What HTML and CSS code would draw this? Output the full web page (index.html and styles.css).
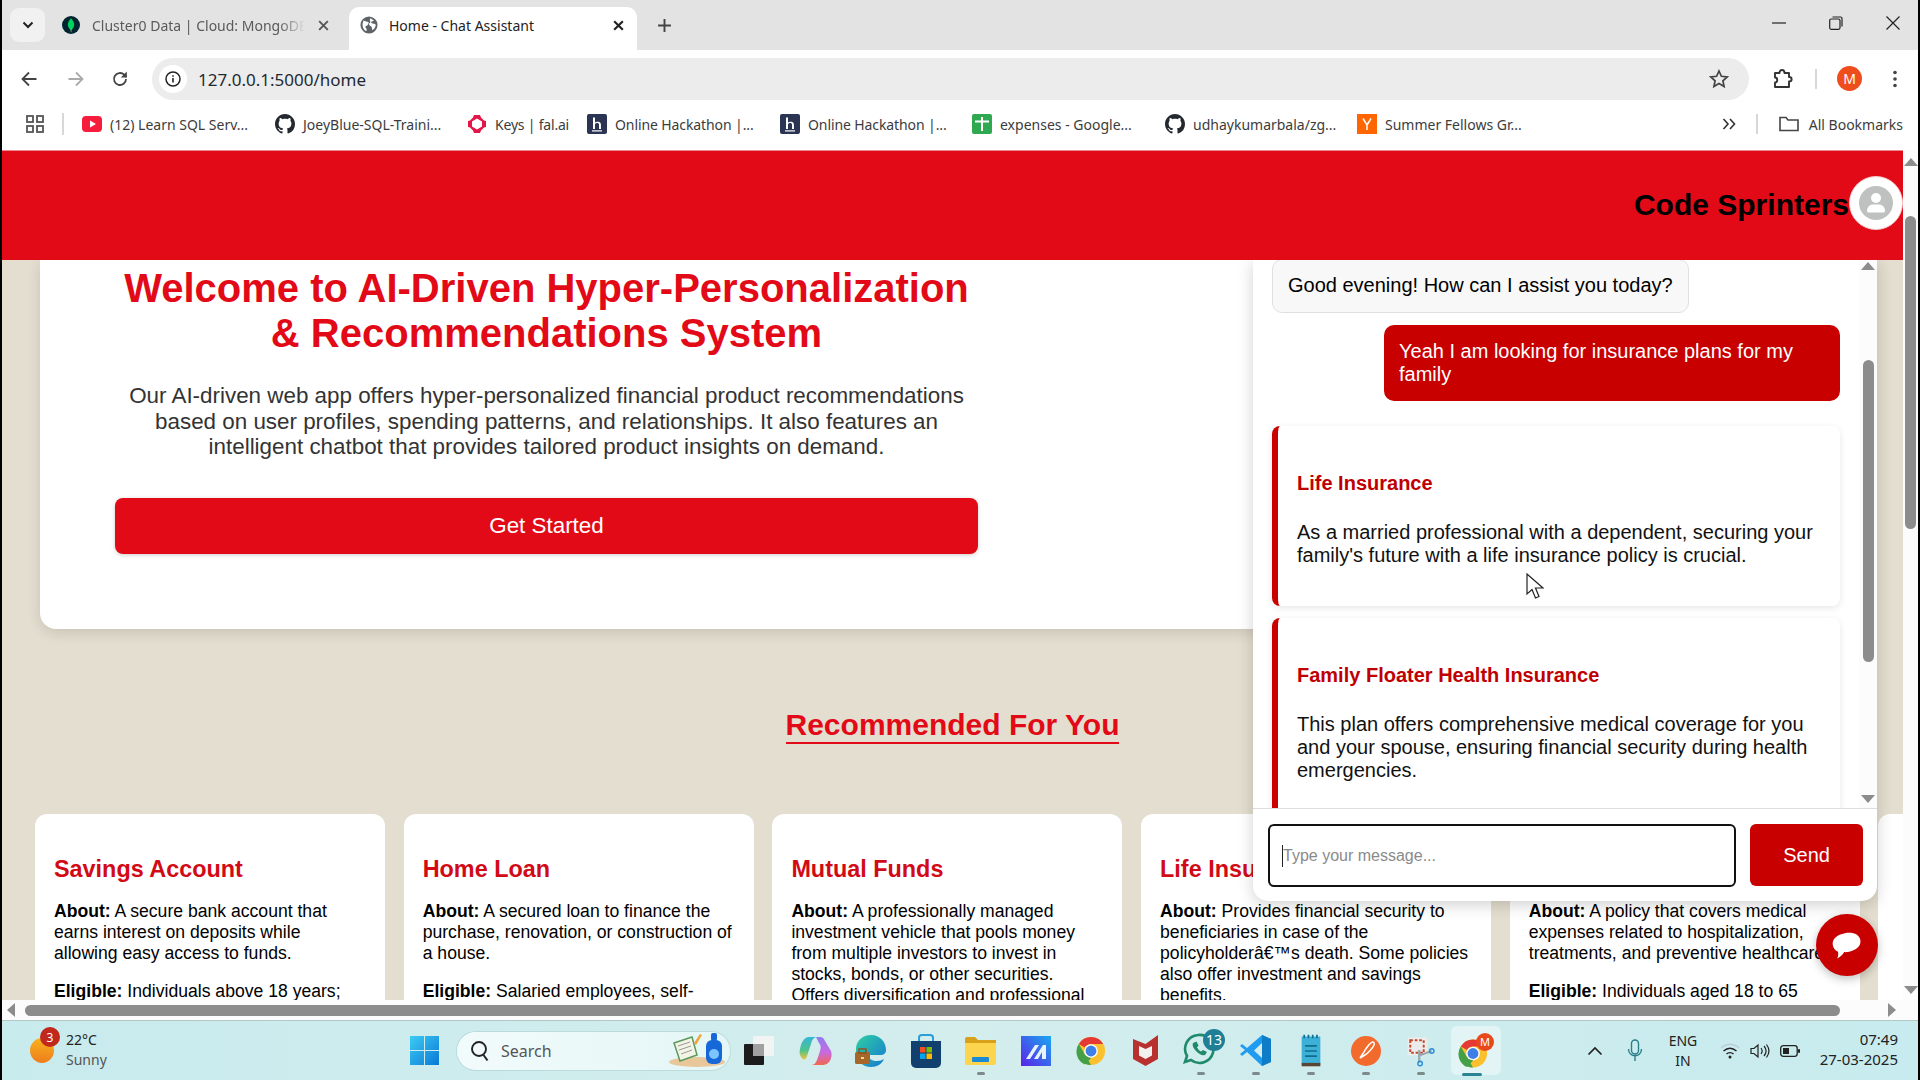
FILE: index.html
```html
<!DOCTYPE html>
<html lang="en">
<head>
<meta charset="utf-8">
<title>Home - Chat Assistant</title>
<link rel="stylesheet" href="styles.css">
</head>
<body>
<svg class="defs" width="0" height="0" aria-hidden="true">
  <symbol id="gh" viewBox="0 0 16 16"><path fill="#24292f" d="M8 0C3.58 0 0 3.58 0 8c0 3.54 2.29 6.53 5.47 7.59.4.07.55-.17.55-.38 0-.19-.01-.82-.01-1.49-2.01.37-2.53-.49-2.69-.94-.09-.23-.48-.94-.82-1.13-.28-.15-.68-.52-.01-.53.63-.01 1.08.58 1.23.82.72 1.21 1.87.87 2.33.66.07-.52.28-.87.51-1.07-1.78-.2-3.64-.89-3.64-3.95 0-.87.31-1.59.82-2.15-.08-.2-.36-1.02.08-2.12 0 0 .67-.21 2.2.82.64-.18 1.32-.27 2-.27.68 0 1.36.09 2 .27 1.53-1.04 2.2-.82 2.2-.82.44 1.1.16 1.92.08 2.12.51.56.82 1.27.82 2.15 0 3.07-1.87 3.75-3.65 3.95.29.25.54.73.54 1.48 0 1.07-.01 1.93-.01 2.2 0 .21.15.46.55.38A8.013 8.013 0 0016 8c0-4.42-3.58-8-8-8z"/></symbol>
  <symbol id="hr" viewBox="0 0 20 20"><rect width="20" height="20" rx="2" fill="#2b3553"/><path d="M6 3.500h2v5c1-1 4.500-1.500 5.500.5.400.8.500 1.500.500 6h-2v-4.500c0-2-3.700-2-4 0V15H6z" fill="#fff"/><rect x="5" y="16.300" width="10" height="1.200" fill="#fff"/></symbol>
  <symbol id="chrome" viewBox="0 0 32 32"><circle cx="16" cy="16" r="15" fill="#fbc02d"/><path d="M16 1a15 15 0 0 1 13 7.500H16a7.500 7.500 0 0 0-6.500 3.750L3 8.500A15 15 0 0 1 16 1z" fill="#e53935"/><path d="M3 8.500l6.500 11.250A7.500 7.500 0 0 0 16 23.500L9.500 30.500 A15 15 0 0 1 3 8.500z" fill="#43a047"/><path d="M9.500 19.750L16 31a15 15 0 0 1-6.800-1.700l6.800-5.800z" fill="#43a047"/><circle cx="16" cy="16" r="7.300" fill="#fff"/><circle cx="16" cy="16" r="5.800" fill="#3f7fe8"/></symbol>
</svg>
<div class="screen">

  <div class="tabstrip">
    <div class="tab-menu"><svg width="12" height="8" viewBox="0 0 12 8"><path d="M1.500 1.500 6 6l4.500-4.500" fill="none" stroke="#222" stroke-width="2"/></svg></div>
    <div class="tab first">
      <svg class="favicon" viewBox="0 0 20 20"><circle cx="10" cy="10" r="10" fill="#01242f"/><path d="M10 2.500c2.800 3 3.700 5.500 3.500 7.800-.2 2.600-2 4.400-3.500 5.400-1.500-1-3.300-2.800-3.500-5.400C6.300 8 7.200 5.500 10 2.500z" fill="#00d25f"/><rect x="9.700" y="14" width=".7" height="4" fill="#9fd8a8"/></svg>
      <span class="tab-title fade">Cluster0 Data | Cloud: MongoDB</span>
      <svg class="tab-x" viewBox="0 0 12 12"><path d="M2 2l8 8M10 2l-8 8" stroke="#555" stroke-width="1.700"/></svg>
    </div>
    <div class="tab current">
      <svg class="favicon" viewBox="0 0 20 20"><circle cx="10" cy="10" r="9.500" fill="#5f6368"/><path d="M4 5c2 .5 3 1.500 4.500 1.500S10 8.500 8.500 10 6 10.500 6 12c0 1 1 1.500 1.500 3S6 17 5.500 16C3 14 1.800 9 4 5zM12 2.500c1 1.500 2.500 1.500 3.500 2.500-1 1-2 .5-3 1.500s1 2 3 2 2 1.500 2 2c-1 3-2 4-3.500 5.200-1-1.200-.5-3-1.500-4s-2.500-1-2.500-2.700c0-1 1.500-1 1.500-2.500C11.500 5.500 10 4 12 2.500z" fill="#fff"/></svg>
      <span class="tab-title">Home - Chat Assistant</span>
      <svg class="tab-x" viewBox="0 0 12 12"><path d="M2 2l8 8M10 2l-8 8" stroke="#222" stroke-width="2"/></svg>
    </div>
    <svg class="tab-plus" viewBox="0 0 14 14"><path d="M7 1v12M1 7h12" stroke="#444" stroke-width="1.800"/></svg>
    <div class="win-controls">
      <svg viewBox="0 0 14 14"><path d="M0 7h14" stroke="#222" stroke-width="1.200"/></svg>
      <svg viewBox="0 0 14 14"><rect x=".7" y="3" width="10.300" height="10.300" rx="1.500" fill="none" stroke="#222" stroke-width="1.200"/><path d="M3.500 1h8a1.500 1.500 0 0 1 1.500 1.500v8" fill="none" stroke="#222" stroke-width="1.200"/></svg>
      <svg viewBox="0 0 14 14"><path d="M.5.500l13 13M13.500.500l-13 13" stroke="#222" stroke-width="1.200"/></svg>
    </div>
  </div>

  <div class="toolbar">
    <svg class="tool back" viewBox="0 0 18 18"><path d="M16.500 9H2.500M9 2.500 2.500 9 9 15.500" fill="none" stroke="#444" stroke-width="1.800"/></svg>
    <svg class="tool fwd" viewBox="0 0 18 18"><path d="M1.500 9h14M9 2.500 15.500 9 9 15.500" fill="none" stroke="#aaa" stroke-width="1.800"/></svg>
    <svg class="tool reload" viewBox="0 0 18 18"><path d="M15 9a6 6 0 1 1-1.800-4.300L15.500 7" fill="none" stroke="#444" stroke-width="1.800"/><path d="M15.800 1.500v6h-6" fill="#444"/></svg>
    <div class="omnibox">
      <span class="info"><svg width="16" height="16" viewBox="0 0 16 16"><circle cx="8" cy="8" r="7" fill="none" stroke="#222" stroke-width="1.500"/><path d="M8 7v4.500M8 4.200v1.600" stroke="#222" stroke-width="1.600"/></svg></span>
      <span class="url">127.0.0.1:5000/home</span>
      <svg class="star" viewBox="0 0 20 20"><path d="M10 2l2.400 5.300 5.800.6-4.300 3.900 1.200 5.700L10 14.600l-5.100 2.900 1.200-5.700L1.800 7.900l5.800-.6z" fill="none" stroke="#444" stroke-width="1.700"/></svg>
    </div>
    <svg class="ext" viewBox="0 0 22 22"><path d="M3 5h4.500c0-4 5-4 5 0H17v4c3.500 0 3.500 4.500 0 4.500V19H3v-4.500c3 0 3-5 0-5z" fill="none" stroke="#333" stroke-width="1.900" stroke-linejoin="round"/></svg>
    <span class="sep tool-sep"></span>
    <span class="profile">M</span>
    <svg class="dots" viewBox="0 0 4 18"><circle cx="2" cy="2.500" r="1.800" fill="#444"/><circle cx="2" cy="9" r="1.800" fill="#444"/><circle cx="2" cy="15.500" r="1.800" fill="#444"/></svg>
  </div>

  <div class="bookmarks">
    <svg class="apps" viewBox="0 0 18 18"><g fill="none" stroke="#555" stroke-width="1.800"><rect x="1" y="1" width="6" height="6"/><rect x="11" y="1" width="6" height="6"/><rect x="1" y="11" width="6" height="6"/><rect x="11" y="11" width="6" height="6"/></g></svg>
    <span class="sep bm-sep"></span>
    <a class="bm b1"><svg viewBox="0 0 20 20"><rect y="2" width="20" height="16" rx="4" fill="#f61c3c"/><path d="M8 6.500v7l6-3.500z" fill="#fff"/></svg>(12) Learn SQL Serv...</a>
    <a class="bm b2"><svg viewBox="0 0 20 20"><use href="#gh"/></svg>JoeyBlue-SQL-Traini...</a>
    <a class="bm b3"><svg viewBox="0 0 20 20"><path d="M7 1h6l1 2.500 3 3L19 7v6l-2 .5-3 3L13 19H7l-1-2.500-3-3L1 13V7l2-.5 3-3z" fill="#e2164a"/><path d="M10 4.500 15 7.500v5L10 15.500 5 12.500v-5z" fill="#fff"/></svg>Keys | fal.ai</a>
    <a class="bm b4"><svg viewBox="0 0 20 20"><use href="#hr"/></svg>Online Hackathon |...</a>
    <a class="bm b5"><svg viewBox="0 0 20 20"><use href="#hr"/></svg>Online Hackathon |...</a>
    <a class="bm b6"><svg viewBox="0 0 20 20"><rect width="20" height="20" rx="2" fill="#2fa84f"/><path d="M3 7.500h14M10 3v14" stroke="#fff" stroke-width="2"/></svg>expenses - Google...</a>
    <a class="bm b7"><svg viewBox="0 0 20 20"><use href="#gh"/></svg>udhaykumarbala/zg...</a>
    <a class="bm b8"><svg viewBox="0 0 20 20"><rect width="20" height="20" fill="#f60"/><path d="M6 4.500l4 6.500 4-6.500M10 11v5" fill="none" stroke="#fff" stroke-width="1.500"/></svg>Summer Fellows Gr...</a>
    <div class="bm-end">
      <svg class="more" viewBox="0 0 14 12"><path d="M1.500 1 6 6l-4.500 5M8 1l4.500 5L8 11" fill="none" stroke="#333" stroke-width="1.600"/></svg>
      <span class="sep end-sep"></span>
      <svg class="folder" viewBox="0 0 20 16"><path d="M1 14.500V1.500h6l2 2.500h10v10.500z" fill="none" stroke="#444" stroke-width="1.600"/></svg>
      <span class="all">All Bookmarks</span>
    </div>
  </div>

  <div class="viewport">
    <main class="page">
      <header class="site-header">
        <span class="brand">Code Sprinters</span>
        <span class="avatar"><svg width="34" height="34" viewBox="0 0 34 34"><circle cx="17" cy="17" r="17" fill="#bfc0c0"/><circle cx="17" cy="12" r="5" fill="#fff"/><path d="M8 25c0-4 3-6.500 6-6.500h6c3 0 6 2.500 6 6.500 0 1-1 1.500-2 1.500H10c-1 0-2-.5-2-1.500z" fill="#fff"/></svg></span>
      </header>
      <section class="hero">
        <h1>Welcome to AI-Driven Hyper-Personalization &amp; Recommendations System</h1>
        <p>Our AI-driven web app offers hyper-personalized financial product recommendations based on user profiles, spending patterns, and relationships. It also features an intelligent chatbot that provides tailored product insights on demand.</p>
        <button class="cta">Get Started</button>
      </section>
      <div class="rec-head"><h2>Recommended For You</h2></div>
      <section class="cards">
        <article class="card"><h3>Savings Account</h3><p><b>About:</b> A secure bank account that earns interest on deposits while allowing easy access to funds.</p><p><b>Eligible:</b> Individuals above 18 years; minimum deposit required.</p></article>
        <article class="card"><h3>Home Loan</h3><p><b>About:</b> A secured loan to finance the purchase, renovation, or construction of a house.</p><p><b>Eligible:</b> Salaried employees, self-employed individuals.</p></article>
        <article class="card"><h3>Mutual Funds</h3><p><b>About:</b> A professionally managed investment vehicle that pools money from multiple investors to invest in stocks, bonds, or other securities. Offers diversification and professional management.</p></article>
        <article class="card"><h3>Life Insurance</h3><p><b>About:</b> Provides financial security to beneficiaries in case of the policyholderâ€™s death. Some policies also offer investment and savings benefits.</p></article>
        <article class="card"><h3>Health Insurance</h3><p><b>About:</b> A policy that covers medical expenses related to hospitalization, treatments, and preventive healthcare.</p><p><b>Eligible:</b> Individuals aged 18 to 65 years.</p></article>
        <article class="card"></article>
      </section>

      <aside class="chat">
        <div class="chat-log">
          <div class="chat-msgs">
            <div class="bubble bot">Good evening! How can I assist you today?</div>
            <div class="bubble user">Yeah I am looking for insurance plans for my family</div>
            <div class="rec"><h4>Life Insurance</h4><p>As a married professional with a dependent, securing your family's future with a life insurance policy is crucial.</p></div>
            <div class="rec"><h4>Family Floater Health Insurance</h4><p>This plan offers comprehensive medical coverage for you and your spouse, ensuring financial security during health emergencies.</p></div>
          </div>
          <div class="chat-scroll">
            <span class="tri up"></span>
            <span class="chat-thumb"></span>
            <span class="tri down"></span>
          </div>
        </div>
        <div class="chat-input">
          <div class="field"><span class="caret"></span><span class="ph">Type your message...</span></div>
          <button class="send">Send</button>
        </div>
        <svg class="cursor" width="18" height="27" viewBox="0 0 18 27"><path d="M1 1v20l5-4.500 3.500 8.500 3.500-1.500-3.500-8.500H17z" fill="#fff" stroke="#222" stroke-width="1.200"/></svg>
      </aside>

      <button class="fab" aria-label="Chat"><svg width="34" height="30" viewBox="0 0 34 30"><path d="M17 3c8 0 14 3.500 14 9.500S25 22 18 22c-2 0-3.500 0-5-.5C11 24 8 26 5 26.500c1.500-2 2-4 2-6.500C4 18 3 15 3 12.500 3 6.500 9 3 17 3z" fill="#fff" transform="rotate(-10 17 15)"/></svg></button>
    </main>

    <div class="vscroll">
      <span class="tri up"></span>
      <span class="v-thumb"></span>
      <span class="tri down"></span>
    </div>
    <div class="hscroll">
      <span class="tri left"></span>
      <span class="h-thumb"></span>
      <span class="tri right"></span>
    </div>
  </div>

  <footer class="taskbar">
    <div class="weather">
      <span class="sun"></span><span class="sun-badge">3</span>
      <div class="w-text"><span class="w-temp">22°C</span><span class="w-sky">Sunny</span></div>
    </div>
    <div class="cell"><svg width="29" height="29" viewBox="0 0 29 29"><defs><linearGradient id="win" x1="0" y1="0" x2="1" y2="1"><stop offset="0" stop-color="#3ccdf4"/><stop offset="1" stop-color="#0a78d6"/></linearGradient></defs><path d="M0 0h14v14H0zM15 0h14v14H15zM0 15h14v14H0zM15 15h14v14H15z" fill="url(#win)"/></svg></div>
    <div class="search">
      <svg width="20" height="22" viewBox="0 0 20 22"><circle cx="9" cy="9" r="7" fill="none" stroke="#222" stroke-width="1.900"/><path d="M13.500 15l4 5.500" stroke="#222" stroke-width="2"/></svg>
      <span>Search</span>
      <svg class="search-art" width="58" height="38" viewBox="0 0 58 38"><ellipse cx="29" cy="31" rx="28" ry="5" fill="#e8c79a"/><path d="M6 12l18-6 5 18-17 6z" fill="#f4f4e6" stroke="#5c9a5c" stroke-width="1.500"/><path d="M10 15l12-4M11 19l12-4M13 23l11-4" stroke="#999"/><path d="M26 12l6-9 2 1-6 10z" fill="#f2a33a"/><rect x="38" y="9" width="16" height="24" rx="6" fill="#1668d8"/><rect x="43" y="2" width="6" height="8" rx="2" fill="#1668d8"/><circle cx="46" cy="23" r="5" fill="#7ec5ff"/></svg>
    </div>
    <div class="cell wide"><svg width="30" height="30" viewBox="0 0 30 30"><rect x="0" y="8" width="20" height="21" rx="1" fill="#1c1c1c"/><rect x="9" y="0" width="21" height="20" rx="1.500" fill="#f2f4f4"/><rect x="9" y="8" width="11" height="12" fill="#a0a0a0"/></svg></div>

    <div class="cell"><svg width="34" height="30" viewBox="0 0 34 30"><defs><linearGradient id="copa" x1="0" y1="0" x2="0" y2="1"><stop offset="0" stop-color="#35b6d8"/><stop offset=".6" stop-color="#4fc38a"/><stop offset="1" stop-color="#f4c23c"/></linearGradient><linearGradient id="copb" x1="0" y1="0" x2="0" y2="1"><stop offset="0" stop-color="#8f7cf0"/><stop offset=".55" stop-color="#c86ae0"/><stop offset="1" stop-color="#f2674a"/></linearGradient></defs><path d="M10 1h7c-3 1-4 3-5 7l-4 12c-1 3-2 4-4 3-3-2-4-6-3-10 1-6 4-12 9-12z" fill="url(#copa)"/><path d="M17 1h4c3 0 4 2 5 4l6 10c2 5-1 14-8 14H12c3 0 5-2 6-5l3-9c1-3 1-6-1-8-1-2-2-4-3-6z" fill="url(#copb)"/></svg></div>
    <div class="cell"><svg width="32" height="34" viewBox="0 0 32 34"><defs><linearGradient id="edge" x1="0" y1="0" x2="1" y2="1"><stop offset="0" stop-color="#2fd0a0"/><stop offset="1" stop-color="#1478d4"/></linearGradient></defs><path d="M1 14C2 5 9 1 16 1c9 0 15 7 15 15 0 3-2 5-6 5H13c0 4 5 6 9 6 3 0 5-1 7-2-2 5-7 8-13 8C7 33 0 26 1 14z" fill="url(#edge)"/><rect x="0" y="18" width="15" height="12" rx="1.500" fill="#a5682a"/><rect x="4" y="15" width="7" height="4" fill="none" stroke="#8a5523" stroke-width="1.500"/><rect x="6" y="23" width="3" height="2" fill="#f8d88a"/></svg></div>
    <div class="cell"><svg width="30" height="34" viewBox="0 0 30 34"><path d="M8 7V3.500C8 1.500 9.500 1 11 1h8c1.500 0 3 .5 3 2.500V7" fill="none" stroke="#2a9ed8" stroke-width="2"/><path d="M0 7h30v22a5 5 0 0 1-5 5H5a5 5 0 0 1-5-5z" fill="#12406e"/><rect x="9" y="13" width="5.500" height="5.500" fill="#f25022"/><rect x="15.500" y="13" width="5.500" height="5.500" fill="#7fba00"/><rect x="9" y="19.500" width="5.500" height="5.500" fill="#00a4ef"/><rect x="15.500" y="19.500" width="5.500" height="5.500" fill="#ffb900"/></svg></div>
    <div class="cell dash"><svg width="31" height="29" viewBox="0 0 31 29"><path d="M0 3a2 2 0 0 1 2-2h8l3 3h18v6H0z" fill="#d9a019"/><path d="M0 7h31v20a2 2 0 0 1-2 2H2a2 2 0 0 1-2-2z" fill="#fdd44e"/><rect x="7" y="21" width="17" height="5" rx="1" fill="#1b8ad4"/></svg></div>
    <div class="cell"><svg width="30" height="30" viewBox="0 0 30 30"><defs><linearGradient id="mae" x1="0" y1="1" x2="1" y2="0"><stop offset="0" stop-color="#5a22e8"/><stop offset="1" stop-color="#1aa8f0"/></linearGradient></defs><rect width="30" height="30" fill="url(#mae)"/><path d="M5 23l9-14h4l-9 14zM13 23l9-14h3v14h-4v-7l-4 7z" fill="#e8f2ff"/></svg></div>
    <div class="cell"><svg width="30" height="30"><use href="#chrome"/></svg></div>
    <div class="cell"><svg width="27" height="31" viewBox="0 0 27 31"><path d="M13.500 31 1 24V4l12.500 5L26 0v24z" fill="#b8312f"/><path d="M13.500 24 7 20.500V11l6.500 3 6.500-3v9.500z" fill="#f3f0f0"/></svg></div>
    <div class="cell dash"><svg width="44" height="38" viewBox="0 0 44 38" class="wa"><path d="M15 6a14 14 0 1 1-7 25l-6 2 2-6A14 14 0 0 1 15 6z" fill="none" stroke="#1f8a6a" stroke-width="2.600"/><path d="M10 14c-1 2 0 5 3 8s6 5 9 4l2-3-4-2-2 1.500c-2-1-3-2.500-4-4l1.500-2-2-4z" fill="#1f8a6a"/><circle cx="31" cy="11" r="11" fill="#1f7f96"/><text x="31" y="16" class="badge-num">13</text></svg></div>
    <div class="cell dash"><svg width="31" height="31" viewBox="0 0 31 31"><path d="M22 0l9 4v23l-9 4L7 17 2 21l-2-2 5-4-5-4 2-2 5 4z" fill="#1f9cf0"/><path d="M22 0v31l9-4V4z" fill="#0f7cc8"/><path d="M22 8l-8 7.500 8 7.500z" fill="#d3ecec"/></svg></div>
    <div class="cell dash"><svg width="22" height="34" viewBox="0 0 22 40"><rect y="3" width="22" height="33" fill="#3cb0d6"/><rect y="34" width="22" height="4" fill="#5b4636"/><path d="M4 14h14M4 20h14M4 26h14" stroke="#0f6e8e" stroke-width="2"/><path d="M3 1v4M8 1v4M13 1v4M18 1v4" stroke="#0f6e8e" stroke-width="2"/></svg></div>
    <div class="cell dash"><svg width="30" height="30" viewBox="0 0 30 30"><circle cx="15" cy="15" r="15" fill="#f26a2c"/><path d="M22 6c-3 0-8 8-9 10l-4 6 5-3c2-1 8-7 9-10 .4-1.200.2-3-1-3z" fill="none" stroke="#fff" stroke-width="1.500"/></svg></div>
    <div class="cell dash"><svg width="32" height="34" viewBox="0 0 32 38"><rect x="1" y="4" width="22" height="20" rx="2" fill="#ececec"/><rect x="4" y="7" width="15" height="14" fill="none" stroke="#c44a2c" stroke-width="2.200" stroke-dasharray="3 2"/><path d="M14 18v14M14 24l14-5" stroke="#9aa8b0" stroke-width="2.500"/><circle cx="28" cy="19" r="2.500" fill="none" stroke="#2a8ed8" stroke-width="1.600"/><circle cx="15" cy="33" r="2.500" fill="none" stroke="#2a8ed8" stroke-width="1.600"/></svg></div>
    <div class="cell running"><svg width="36" height="36" viewBox="0 0 36 36"><svg x="0" y="5" width="30" height="31"><use href="#chrome"/></svg><circle cx="27" cy="9" r="9" fill="#e8481c"/><text x="27" y="13" class="badge-m">M</text></svg></div>

    <div class="tray">
      <span class="tray-cell"><svg width="16" height="10" viewBox="0 0 16 10"><path d="M1.500 8.500 8 2l6.500 6.500" fill="none" stroke="#222" stroke-width="1.700"/></svg></span>
      <span class="tray-cell"><svg width="16" height="24" viewBox="0 0 16 24"><rect x="4.500" y="1" width="7" height="14" rx="3.500" fill="none" stroke="#2b7f8a" stroke-width="1.400"/><path d="M1.500 10c0 9 13 9 13 0M8 17v5" fill="none" stroke="#2b7f8a" stroke-width="1.400"/></svg></span>
      <span class="lang">ENG<br>IN</span>
      <span class="tray-sm wifi"><svg width="20" height="16" viewBox="0 0 20 16"><path d="M1 5c5-5 13-5 18 0" fill="none" stroke="#bcd" stroke-width="1.300"/><path d="M3.500 8c4-3.500 9-3.500 13 0M6.500 11c2-1.800 5-1.800 7 0" fill="none" stroke="#222" stroke-width="1.400"/><circle cx="10" cy="14" r="1.500" fill="#222"/></svg></span>
      <span class="tray-sm"><svg width="20" height="16" viewBox="0 0 20 16"><path d="M1 5.500h3L8 2v12l-4-3.500H1z" fill="none" stroke="#222" stroke-width="1.200"/><path d="M11 5c1.500 2 1.500 4 0 6M14 3c2.500 3 2.500 7 0 10M16.500 1.500c3 4 3 9 0 13" fill="none" stroke="#222" stroke-width="1.200"/></svg></span>
      <span class="tray-sm"><svg width="20" height="12" viewBox="0 0 20 12"><rect x=".7" y=".7" width="16.500" height="10.600" rx="2.500" fill="none" stroke="#222" stroke-width="1.300"/><rect x="3" y="3" width="6" height="6" fill="#222"/><rect x="18" y="4" width="2" height="4" rx="1" fill="#222"/></svg></span>
      <span class="clock">07:49<br>27-03-2025</span>
    </div>
  </footer>
</div>
</body>
</html>
```

FILE: styles.css
```css
* { box-sizing: border-box; }
html, body { margin: 0; padding: 0; height: 100%; overflow: hidden; background: #000; }
body { font-family: "Liberation Sans", Arial, sans-serif; }
.defs { position: absolute; }
.screen { width: 1920px; height: 1080px; padding: 0 2px; display: flex; flex-direction: column; font-family: "Noto Sans", sans-serif; }

/* browser chrome */
.tabstrip { flex: 0 0 50px; background: #e3e3e3; display: flex; align-items: flex-end; padding-left: 8px; font-size: 14px; color: #222; }
.tab-menu { width: 35px; height: 34px; margin-bottom: 8px; border-radius: 9px; background: #f1f1f1; display: flex; align-items: center; justify-content: center; }
.tab { width: 288px; height: 43px; display: flex; align-items: center; padding: 0 12px 7px 11px; border-radius: 10px 10px 0 0; }
.tab.first { width: 293px; margin-left: 7px; padding: 0 15px 7px 10px; color: #555; }
.tab.current { background: #fff; color: #222; padding-right: 12px; margin-left: 4px; }
.favicon { width: 18px; height: 18px; flex: none; }
.tab-title { margin-left: 11px; flex: 1; white-space: nowrap; overflow: hidden; }
.fade { margin-left: 12px; -webkit-mask-image: linear-gradient(90deg, #000 88%, transparent 100%); mask-image: linear-gradient(90deg, #000 88%, transparent 100%); color: #5a5a5a; }
.tab-x { width: 13px; height: 13px; flex: none; margin-left: 12px; }
.tab-plus { width: 15px; height: 15px; margin: 0 0 17px 20px; }
.win-controls { margin-left: auto; margin-bottom: 20px; padding-right: 18px; display: flex; gap: 43px; }
.win-controls svg { width: 14px; height: 14px; display: block; }

.toolbar { flex: 0 0 50px; background: #fff; display: flex; align-items: flex-start; padding-top: 8px; }
.tool { width: 18px; height: 18px; margin-top: 12px; flex: none; }
.back { margin-left: 18px; }
.fwd { margin-left: 29px; }
.reload { margin-left: 26px; }
.omnibox { margin-left: 23px; width: 1597px; height: 42px; background: #ececec; border-radius: 21px; display: flex; align-items: center; padding: 0 20px 0 7px; }
.info { width: 28px; height: 28px; border-radius: 50%; background: #fff; display: flex; align-items: center; justify-content: center; flex: none; }
.url { margin-left: 11px; font-size: 17px; color: #1f2a33; flex: 1; }
.star { width: 20px; height: 20px; flex: none; }
.ext { width: 22px; height: 22px; margin: 10px 0 0 23px; flex: none; }
.sep { display: block; width: 2px; background: #d8d8d8; flex: none; }
.tool-sep { height: 20px; margin: 11px 0 0 21px; }
.profile { width: 25px; height: 25px; border-radius: 50%; background: #ef4e1c; color: #fff; font-size: 14px; display: flex; align-items: center; justify-content: center; margin: 8px 0 0 20px; flex: none; }
.dots { width: 4px; height: 18px; margin: 12px 0 0 31px; flex: none; }

.bookmarks { flex: 0 0 50px; background: #fff; display: flex; align-items: center; font-size: 14px; color: #3c3c3c; padding-bottom: 2px; }
.apps { width: 18px; height: 18px; margin-left: 24px; flex: none; }
.sep.bm-sep { height: 22px; margin-left: 18px; }
.bm { display: flex; align-items: center; white-space: nowrap; flex: none; }
.bm svg { width: 20px; height: 20px; margin-right: 8px; flex: none; }
.b1 { margin-left: 18px; width: 193px; }
.b2 { width: 192px; }
.b3 { width: 120px; letter-spacing: -.2px; }
.b4 { width: 193px; letter-spacing: -.1px; }
.b5 { width: 192px; letter-spacing: -.1px; }
.b6 { width: 193px; }
.b7 { width: 192px; }
.bm-end { margin-left: auto; display: flex; align-items: center; }
.more { width: 14px; height: 12px; flex: none; }
.sep.end-sep { height: 20px; margin-left: 20px; }
.folder { width: 20px; height: 16px; margin-left: 21px; flex: none; }
.all { margin: 0 15px 0 10px; }

/* viewport */
.viewport { flex: 0 0 870px; display: grid; grid-template-columns: 1901px 15px; grid-template-rows: 850px 20px; }
.page { position: relative; overflow: hidden; background: #e3decf; font-family: "Liberation Sans", Arial, sans-serif; }
.site-header { height: 110px; background: #e30a17; display: flex; justify-content: flex-end; align-items: center; padding-bottom: 5px; position: relative; z-index: 3; box-shadow: inset 0 1px 0 #eb8b8f; }
.brand { font-size: 30px; font-weight: 700; color: #000; padding-top: 4px; }
.avatar { width: 54px; height: 54px; border-radius: 50%; background: #fff; border: 1px solid #f5c8cb; display: flex; align-items: center; justify-content: center; }

.hero { margin-left: 38px; width: 1400px; padding: 6px 0 75px 75px; background: #fff; border-radius: 0 0 16px 16px; box-shadow: 0 4px 14px rgba(0,0,0,.12); }
.hero h1 { margin: 0; width: 863px; font-size: 40px; line-height: 45px; font-weight: 700; color: #e30a17; text-align: center; }
.hero p { margin: 27px 0 0; width: 863px; font-size: 22.4px; line-height: 25.7px; color: #333; text-align: center; }
.cta { display: block; margin-top: 38px; width: 863px; height: 56px; border: 0; border-radius: 8px; background: #e30a17; color: #fff; font: 22.4px "Liberation Sans", Arial, sans-serif; box-shadow: 0 1px 4px rgba(0,0,0,.2); }

.rec-head { margin-top: 78px; text-align: center; }
.rec-head h2 { display: inline-block; margin: 0; font-size: 30px; line-height: 35px; font-weight: 700; color: #e30a17; border-bottom: 2px solid #e30a17; }
.cards { margin: 70px 0 0 33px; display: flex; gap: 18.7px; width: 2400px; }
.card { flex: 0 0 350px; height: 420px; padding: 41px 19px 0; background: #fff; border-radius: 12px; color: #000; }
.card h3 { margin: 0 0 18px; font-size: 23.4px; line-height: 28px; font-weight: 700; color: #d20a16; }
.card p { margin: 0 0 17px; font-size: 17.6px; line-height: 21px; }

/* chat */
.chat { position: absolute; z-index: 2; left: 1251px; top: 109px; width: 624px; height: 642px; background: #fff; border-radius: 0 0 15px 15px; box-shadow: 0 4px 16px rgba(0,0,0,.18); display: flex; flex-direction: column; overflow: hidden; font-size: 20px; line-height: 23px; }
.chat-log { flex: 0 0 550px; min-height: 0; overflow: hidden; display: flex; border-bottom: 1px solid #ddd; }
.chat-msgs { width: 606px; padding: 0 19px; overflow: hidden; display: flex; flex-direction: column; align-items: flex-start; }
.bubble { padding: 15px; border-radius: 10px; flex: none; }
.bot { background: #f8f8f8; border: 1px solid #e0e0e0; height: 54px; padding-top: 14px; padding-bottom: 0; }
.user { margin: 12px 0 25px; width: 456px; align-self: flex-end; background: #c80000; color: #fff; }
.rec { width: 568px; flex: none; padding: 46px 17px 39px 19px; border-left: 6px solid #c80000; background: #fff; border-radius: 8px; box-shadow: 0 2px 7px rgba(0,0,0,.1); margin-bottom: 12px; color: #111; }
.rec h4 { margin: 0 0 26px; font-size: 20px; font-weight: 700; color: #c00000; }
.rec p { margin: 0; }
.chat-scroll { flex: 0 0 18px; background: #fcfcfc; display: flex; flex-direction: column; align-items: center; padding: 3px 0 5px; }
.chat-thumb { width: 11px; height: 302px; margin-top: 90px; background: #8c8c8c; border-radius: 6px; }
.chat-scroll .down { margin-top: auto; }
.chat-input { flex: 1; display: flex; gap: 14px; padding: 15px 14px 0 15px; align-items: flex-start; }
.field { width: 469px; height: 63px; border: 2px solid #111; border-radius: 6px; display: flex; align-items: center; padding-left: 12px; font-size: 16px; color: #8a8a8a; }
.caret { width: 1px; height: 22px; background: #222; }
.send { width: 113px; height: 62px; border: 0; border-radius: 6px; background: #c80000; color: #fff; font: 20px "Liberation Sans", Arial, sans-serif; }
.cursor { position: absolute; left: 273px; top: 314px; }
.fab { position: absolute; z-index: 4; left: 1814px; top: 764px; width: 62px; height: 62px; border: 0; padding: 0; border-radius: 50%; background: #c80000; box-shadow: 0 3px 10px rgba(0,0,0,.25); display: flex; align-items: center; justify-content: center; }

/* scrollbars */
.tri { width: 0; height: 0; display: block; flex: none; }
.tri.up { border: solid transparent; border-width: 0 7px 8px; border-bottom-color: #8c8c8c; }
.tri.down { border: solid transparent; border-width: 8px 7px 0; border-top-color: #8c8c8c; }
.tri.left { border: solid transparent; border-width: 7px 8px 7px 0; border-right-color: #8c8c8c; }
.tri.right { border: solid transparent; border-width: 7px 0 7px 8px; border-left-color: #8c8c8c; }
.vscroll { background: #fcfcfc; display: flex; flex-direction: column; align-items: center; padding: 8px 0 6px; }
.v-thumb { width: 11px; height: 313px; margin-top: 50px; background: #8c8c8c; border-radius: 6px; }
.vscroll .down { margin-top: auto; }
.hscroll { grid-column: 1 / 3; background: #fcfcfc; display: flex; align-items: center; padding: 0 22px 0 5px; }
.h-thumb { width: 1815px; height: 11px; margin-left: 10px; background: #8c8c8c; border-radius: 6px; }
.hscroll .right { margin-left: auto; }

/* taskbar */
.taskbar { flex: 0 0 60px; background: linear-gradient(90deg, #c8ebee, #d4eded 50%, #c7ebee); border-top: 1px solid #b4c8c8; display: flex; align-items: center; padding-left: 26px; font-size: 14px; color: #222; }
.weather { width: 369px; height: 100%; display: flex; align-items: center; position: relative; flex: none; }
.sun { width: 24px; height: 25px; border-radius: 50%; background: linear-gradient(#f7b21e, #ee7d1c); margin-left: 2px; }
.sun-badge { position: absolute; left: 12px; top: 6px; width: 20px; height: 20px; border-radius: 50%; background: #c0281c; color: #fff; font-size: 12px; display: flex; align-items: center; justify-content: center; }
.w-text { display: flex; flex-direction: column; margin-left: 12px; line-height: 20px; padding-bottom: 1px; }
.w-sky { color: #555; }
.cell { width: 55px; height: 100%; display: flex; align-items: center; justify-content: center; flex: none; position: relative; }
.cell.wide { width: 58px; }
.dash::after { content: ""; position: absolute; left: 24px; bottom: 5px; width: 8px; height: 3px; border-radius: 2px; background: #7d8a8c; }
.running::before { content: ""; position: absolute; left: 3px; top: 5px; right: 2px; bottom: 5px; border-radius: 6px; background: rgba(255,255,255,.45); }
.running svg { position: relative; }
.running::after { content: ""; position: absolute; left: 14px; bottom: 4px; width: 20px; height: 3px; border-radius: 2px; background: #2b8494; }
.search { margin-left: 5px; width: 273px; height: 38px; flex: none; border-radius: 19px; background: linear-gradient(90deg, #f2fbfb, #e4f6f6); box-shadow: 0 0 0 1px rgba(150,190,190,.35); display: flex; align-items: center; padding-left: 13px; font-size: 16px; color: #555; position: relative; }
.search > span { margin-left: 11px; }
.search-art { position: absolute; right: 4px; top: -1px; }
.wa { overflow: visible; margin: -6px 0 0 8px; }
.badge-num { font: 14px "Noto Sans", sans-serif; fill: #fff; text-anchor: middle; }
.badge-m { font: 11px "Noto Sans", sans-serif; fill: #fff; text-anchor: middle; }
.tray { margin-left: 72px; flex: 1; display: flex; align-items: center; height: 100%; }
.tray-cell { width: 40px; display: flex; justify-content: center; flex: none; }
.tray-sm { width: 30px; display: flex; justify-content: center; flex: none; }
.wifi { margin-left: 4px; }
.lang { width: 56px; text-align: center; line-height: 20px; flex: none; }
.clock { margin-left: auto; padding: 0 20px 3px 0; text-align: right; line-height: 20px; font-size: 15px; }
```
